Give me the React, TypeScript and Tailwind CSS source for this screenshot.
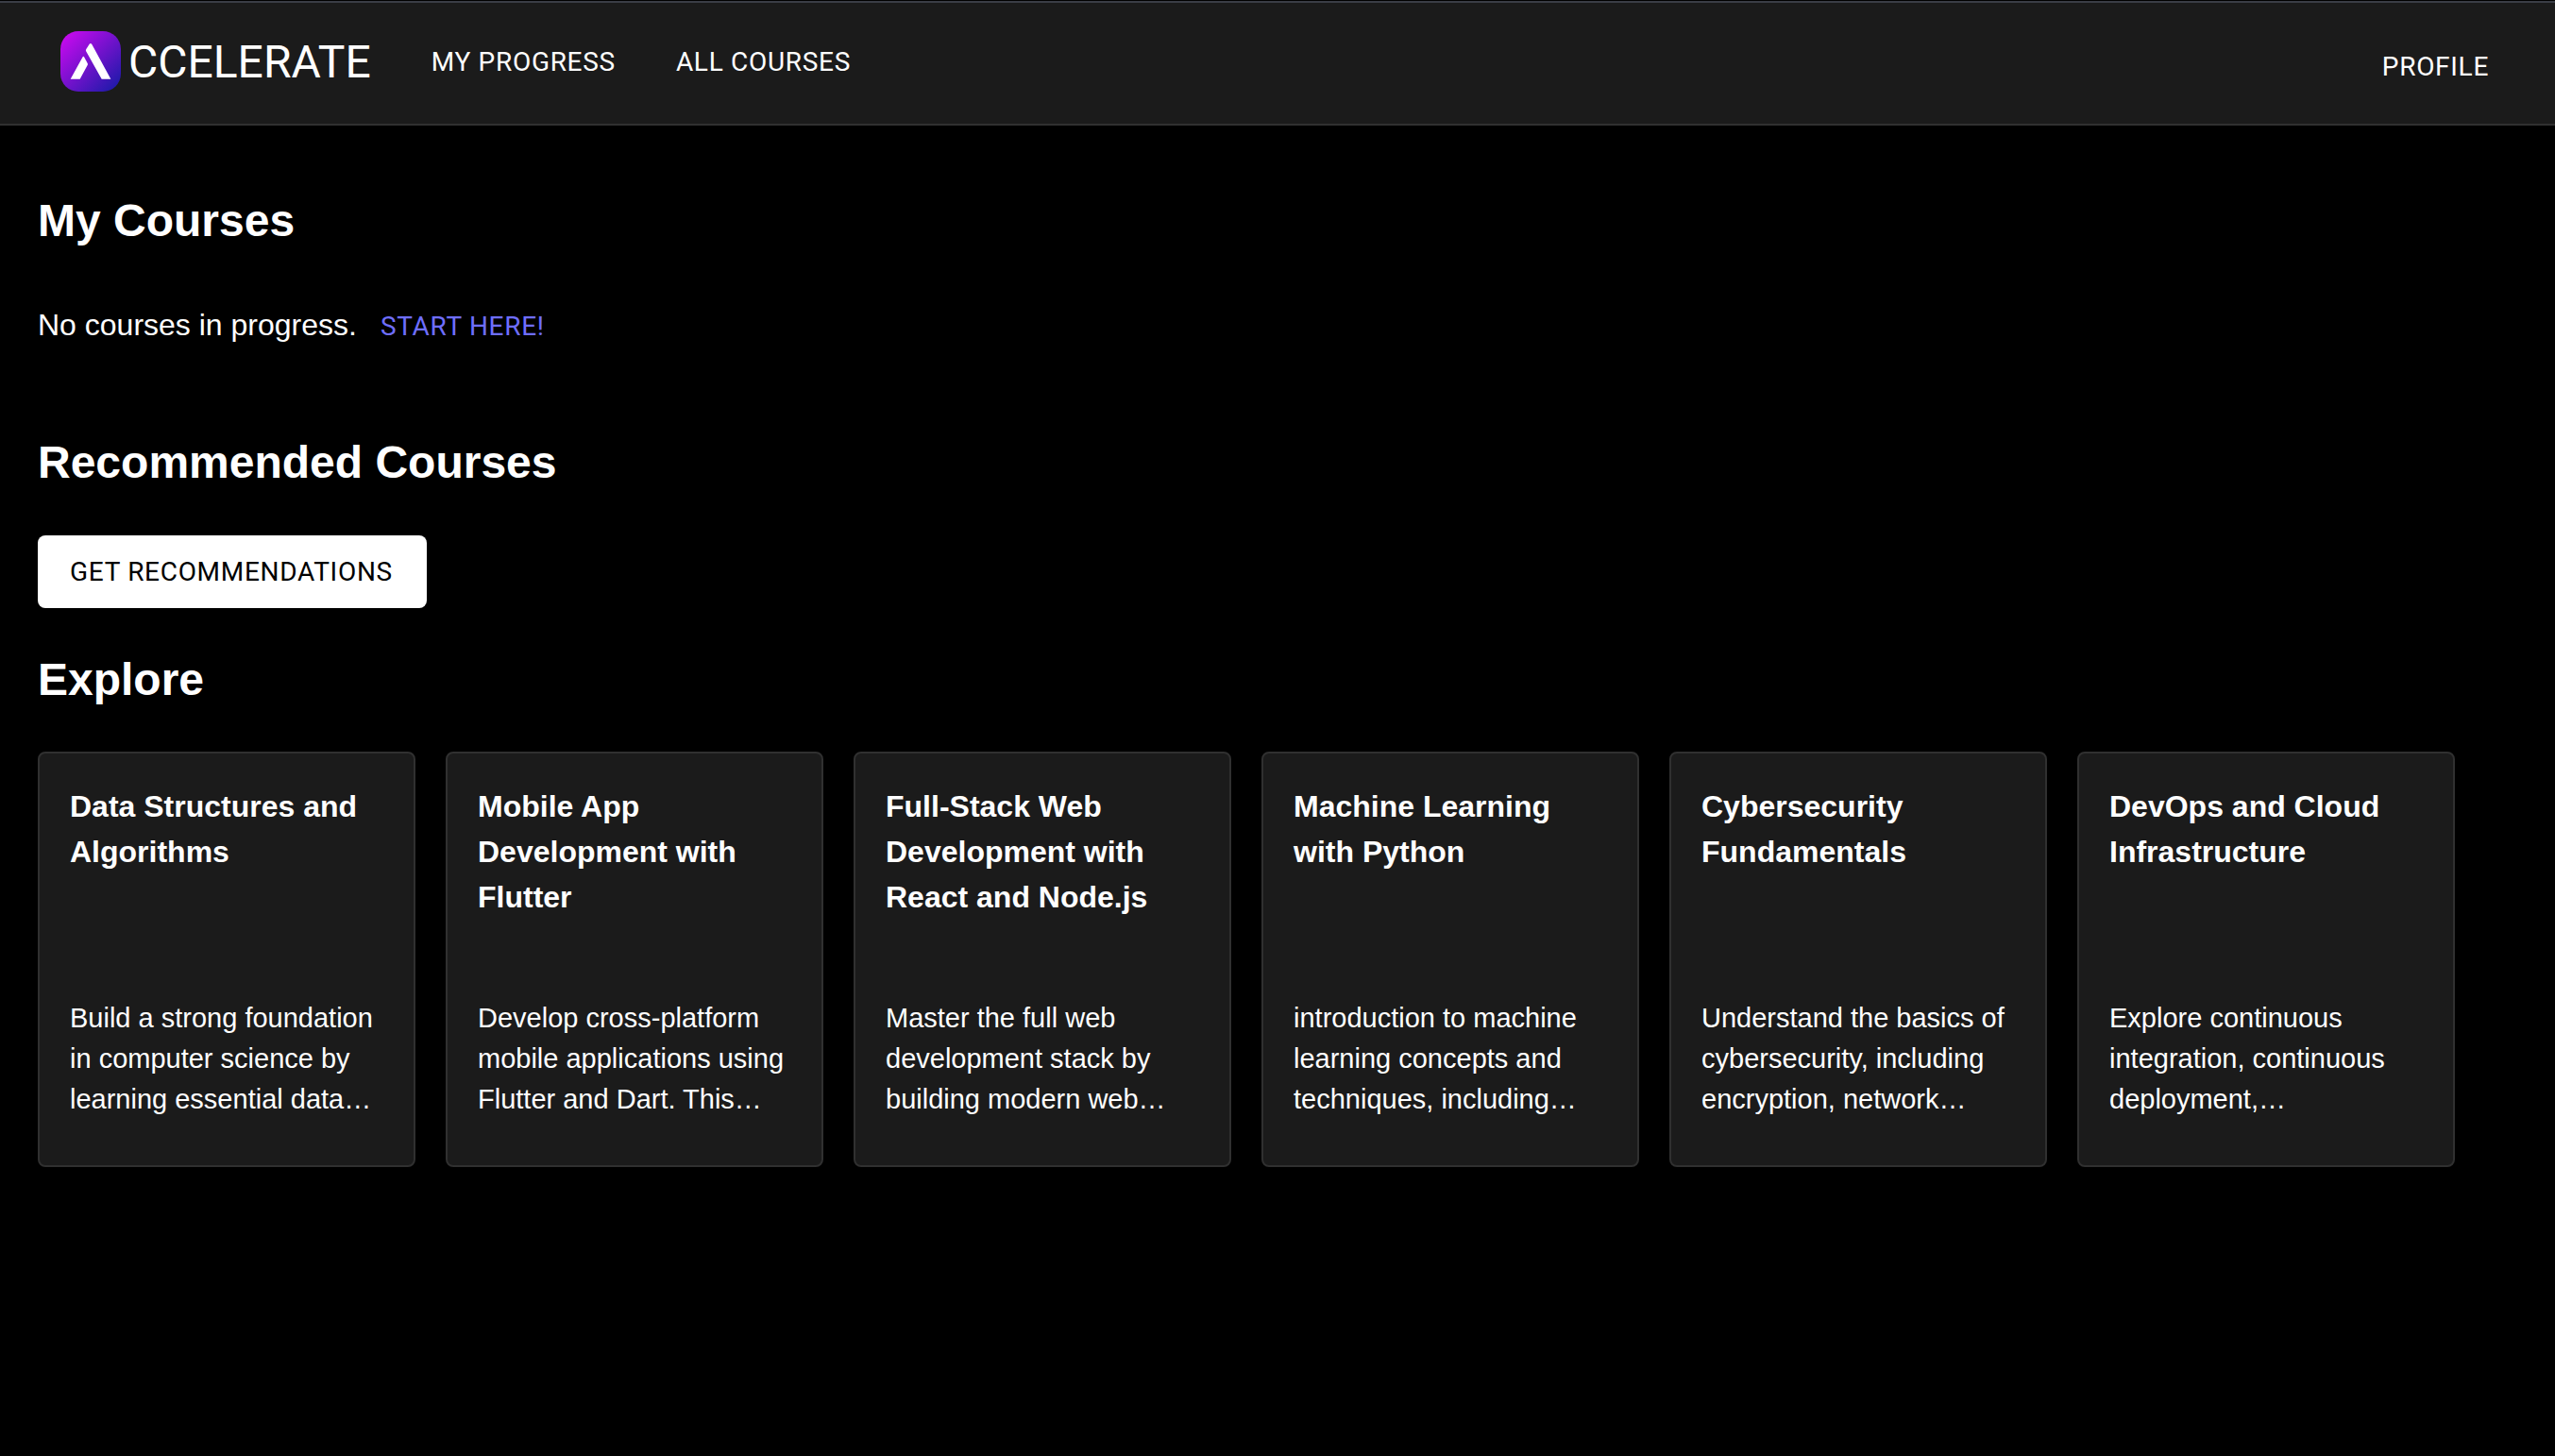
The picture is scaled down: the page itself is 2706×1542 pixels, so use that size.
type Course = { title: string; description: string };

const courses: Course[] = [
  { title: "Data Structures and Algorithms", description: "Build a strong foundation in computer science by learning essential data…" },
  { title: "Mobile App Development with Flutter", description: "Develop cross-platform mobile applications using Flutter and Dart. This…" },
  { title: "Full-Stack Web Development with React and Node.js", description: "Master the full web development stack by building modern web…" },
  { title: "Machine Learning with Python", description: "introduction to machine learning concepts and techniques, including…" },
  { title: "Cybersecurity Fundamentals", description: "Understand the basics of cybersecurity, including encryption, network…" },
  { title: "DevOps and Cloud Infrastructure", description: "Explore continuous integration, continuous deployment,…" },
];

function Logo() {
  return (
    <svg viewBox="0 0 192 192" className="size-16" aria-hidden="true">
      <defs>
        <linearGradient id="logo-fill" x1="0" y1="0" x2="1" y2="1">
          <stop offset="0.04" stopColor="#cc0af0" />
          <stop offset="0.96" stopColor="#1a1aa8" />
        </linearGradient>
      </defs>
      <rect width="192" height="192" rx="57" fill="url(#logo-fill)" />
      <path fill="#fff" d="M92 41Q96 36 100 42L160 152H131L81 63Q80 60 82 57ZM70 83Q73 78 76 83L86 102Q88 105 86 108L62 152H32Z" />
    </svg>
  );
}

function Header() {
  return (
    <header className="flex h-[132px] items-center justify-between border-y-2 border-t-[#3a3d46] border-b-[#303030] bg-[#1b1b1b] px-16 pb-1 font-[Roboto,sans-serif]">
      <div className="flex items-center gap-16">
        <a href="#home" className="flex items-center gap-2 text-5xl">
          <Logo />
          <span className="pt-0.5">CCELERATE</span>
        </a>
        <nav className="flex gap-16 pt-0.5 text-[28px] leading-10 tracking-wide">
          <a href="#progress">MY PROGRESS</a>
          <a href="#courses">ALL COURSES</a>
        </nav>
      </div>
      <button type="button" className="mr-1.5 pt-3 text-[28px] leading-10 tracking-wide">PROFILE</button>
    </header>
  );
}

function CourseCard({ title, description }: Course) {
  return (
    <article className="flex min-h-[440px] w-[400px] flex-col justify-between rounded-lg border-2 border-[#303030] bg-[#1b1b1b] px-8 pt-8 pb-12">
      <h3 className="text-[32px] leading-[48px] font-bold">{title}</h3>
      <p className="text-[29px] leading-[43px]">{description}</p>
    </article>
  );
}

export default function App() {
  return (
    <div className="min-h-screen bg-black pt-px font-['Liberation_Sans',Arial,sans-serif] text-white">
      <Header />
      <main className="px-10 pt-[65px] pb-10">
        <section>
          <h2 className="text-5xl leading-[72px] font-bold">My Courses</h2>
          <div className="mt-[50px] flex items-baseline gap-[25px]">
            <p className="text-[32px] leading-[48px]">No courses in progress.</p>
            <a href="#start" className="font-[Roboto,sans-serif] text-[28px] leading-[48px] tracking-wide text-[#6e6eff]">START HERE!</a>
          </div>
        </section>
        <section className="mt-[84px]">
          <h2 className="text-5xl leading-[72px] font-bold">Recommended Courses</h2>
          <button type="button" className="mt-[41px] rounded-lg bg-white pr-9 pl-[34px] py-[14px] font-[Roboto,sans-serif] text-[28px] leading-[49px] tracking-wide text-black">
            GET RECOMMENDATIONS
          </button>
        </section>
        <section className="mt-10">
          <h2 className="text-5xl leading-[72px] font-bold">Explore</h2>
          <div className="mt-10 flex flex-wrap gap-8">
            {courses.map((course) => (
              <CourseCard key={course.title} {...course} />
            ))}
          </div>
        </section>
      </main>
    </div>
  );
}
